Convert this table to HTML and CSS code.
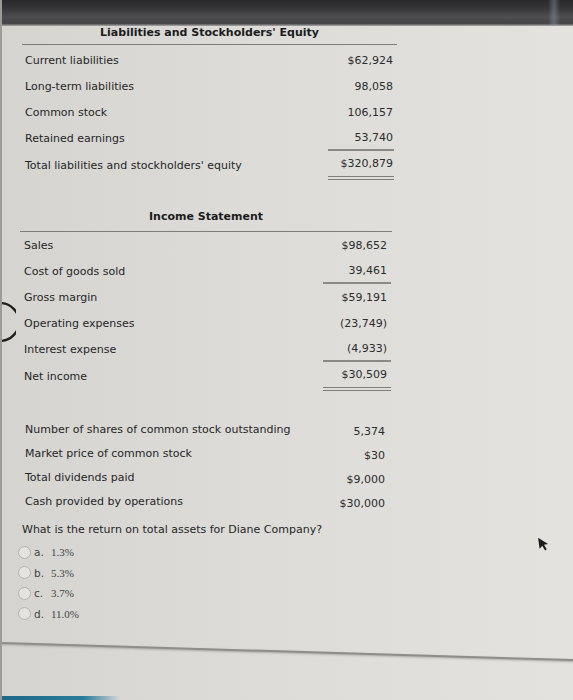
FILE: index.html
```html
<!DOCTYPE html>
<html lang="en">
<head>
<meta charset="utf-8">
<title>Diane Company</title>
<link rel="stylesheet" href="styles.css">
</head>
<body>
<div class="screen">
  <div class="topbar"><span class="glare"></span></div>
  <main class="content">
    <section class="sheet sheet-bs">
      <div class="title">Liabilities and Stockholders' Equity</div>
      <div class="row"><span class="label">Current liabilities</span><span class="val">$62,924</span></div>
      <div class="row"><span class="label">Long-term liabilities</span><span class="val">98,058</span></div>
      <div class="row"><span class="label">Common stock</span><span class="val">106,157</span></div>
      <div class="row"><span class="label">Retained earnings</span><span class="val under">53,740</span></div>
      <div class="row"><span class="label">Total liabilities and stockholders' equity</span><span class="val dbl">$320,879</span></div>
    </section>

    <section class="sheet sheet-is">
      <div class="title">Income Statement</div>
      <div class="row"><span class="label">Sales</span><span class="val">$98,652</span></div>
      <div class="row"><span class="label">Cost of goods sold</span><span class="val under">39,461</span></div>
      <div class="row"><span class="label">Gross margin</span><span class="val">$59,191</span></div>
      <div class="row"><span class="label">Operating expenses</span><span class="val">(23,749)</span></div>
      <div class="row"><span class="label">Interest expense</span><span class="val under">(4,933)</span></div>
      <div class="row"><span class="label">Net income</span><span class="val dbl">$30,509</span></div>
    </section>

    <section class="extra">
      <div class="xrow"><span class="label">Number of shares of common stock outstanding</span><span class="xval">5,374</span></div>
      <div class="xrow"><span class="label">Market price of common stock</span><span class="xval">$30</span></div>
      <div class="xrow"><span class="label">Total dividends paid</span><span class="xval">$9,000</span></div>
      <div class="xrow"><span class="label">Cash provided by operations</span><span class="xval">$30,000</span></div>
    </section>

    <p class="question">What is the return on total assets for Diane Company?</p>

    <ul class="options">
      <li class="opt"><span class="radio"></span><span class="letter">a.</span><span class="ans">1.3%</span></li>
      <li class="opt"><span class="radio"></span><span class="letter">b.</span><span class="ans">5.3%</span></li>
      <li class="opt"><span class="radio"></span><span class="letter">c.</span><span class="ans">3.7%</span></li>
      <li class="opt"><span class="radio"></span><span class="letter">d.</span><span class="ans">11.0%</span></li>
    </ul>
  </main>

  <svg class="arc" width="16" height="50" viewBox="0 0 16 50" aria-hidden="true">
    <path d="M0 6 A19 19 0 0 1 0 44" fill="none" stroke="#1e1e1e" stroke-width="2.4"/>
  </svg>
  <svg class="cursor" width="12" height="16" viewBox="0 0 12 16" aria-hidden="true">
    <path d="M1 1 L1 12 L4 9.5 L6.2 14.5 L8 13.7 L5.9 8.8 L10 8.6 Z" fill="#1c1c1c"/>
  </svg>
  <div class="edge-line"></div>
  <div class="blue-strip"></div>
</div>
</body>
</html>
```

FILE: styles.css
```css
html, body {
  margin: 0;
  padding: 0;
}

body {
  width: 573px;
  height: 700px;
  overflow: hidden;
  font-family: "DejaVu Sans", Verdana, sans-serif;
  font-size: 11px;
  color: #262626;
  background: #dedcd8;
}

.screen {
  position: relative;
  width: 573px;
  height: 700px;
  overflow: hidden;
  background: linear-gradient(to right, #d5d4d0 0%, #dcdbd7 40%, #e3e2de 100%);
  border-left: 2px solid #9c9b98;
  box-sizing: border-box;
}

.topbar {
  position: relative;
  height: 26px;
  background: linear-gradient(to bottom, #2a2a2d 0%, #353538 30%, #4e4e51 65%, #444447 90%, #a9a8a6 100%);
}

.glare {
  position: absolute;
  top: 0;
  bottom: 0;
  left: 546px;
  width: 12px;
  background: linear-gradient(to right, rgba(160,170,180,0) 0%, rgba(150,160,170,0.4) 50%, rgba(160,170,180,0) 100%);
}

.content {
  display: flex;
  flex-direction: column;
}

.sheet {
  display: flex;
  flex-direction: column;
}

.sheet-bs {
  width: 375px;
  margin-left: 20px;
}

.sheet-is {
  width: 372px;
  margin-left: 18px;
  margin-top: 30px;
}

.title {
  line-height: 14px;
  font-weight: bold;
  text-align: center;
  color: #1c1c1c;
  padding-bottom: 4px;
  border-bottom: 1px solid #7e7d7a;
}

.sheet-is .title {
  padding-bottom: 7px;
}

.row {
  display: flex;
  justify-content: space-between;
  align-items: stretch;
  height: 26px;
}

.sheet-bs .title + .row {
  margin-top: 2px;
}

.label {
  display: flex;
  align-items: center;
  padding-left: 3px;
}

.sheet-is .label {
  padding-left: 4px;
}

.val {
  display: flex;
  align-items: center;
  justify-content: flex-end;
  width: 66px;
  padding-right: 1px;
  margin-right: 3px;
  color: #2c2c2c;
  box-sizing: border-box;
}

.sheet-is .val {
  width: 68px;
  padding-right: 4px;
  margin-right: 1px;
}

.val.under {
  border-bottom: 2px solid #8a8986;
}

.val.dbl {
  height: 29px;
  border-bottom: 4px double #7f7e7b;
}

.row:has(.dbl) {
  height: 29px;
}

.extra {
  display: flex;
  flex-direction: column;
  width: 363px;
  margin-left: 20px;
  margin-top: 26px;
}

.xrow {
  display: flex;
  justify-content: space-between;
  align-items: center;
  height: 24px;
}

.xrow .label {
  padding-left: 3px;
}

.xval {
  padding-top: 4px;
  color: #2c2c2c;
}

.question {
  margin: 5px 0 0 20px;
  line-height: 24px;
  color: #262626;
}

.options {
  list-style: none;
  margin: 0;
  padding: 0 0 0 16px;
  display: flex;
  flex-direction: column;
}

.opt {
  display: flex;
  align-items: center;
  height: 20.5px;
  color: #444;
}

.radio {
  width: 11px;
  height: 11px;
  border-radius: 50%;
  border: 1px solid #b3b2ae;
  background: #e4e3df;
  margin-right: 3px;
}

.letter {
  font-size: 10.5px;
  width: 17px;
}

.ans {
  font-family: "Liberation Serif", "Times New Roman", serif;
  font-size: 11px;
  color: #444;
}

.arc {
  position: absolute;
  left: -2px;
  top: 297px;
}

.cursor {
  position: absolute;
  left: 536px;
  top: 536px;
  transform: rotate(-8deg);
}

.edge-line {
  position: absolute;
  left: -4px;
  top: 642px;
  width: 600px;
  height: 2px;
  background: #8e8d8a;
  box-shadow: 0 1px 2px rgba(120,120,118,0.5);
  transform: rotate(1.7deg);
  transform-origin: 0 0;
}

.blue-strip {
  position: absolute;
  left: -2px;
  bottom: 0;
  width: 120px;
  height: 4px;
  background: linear-gradient(to right, #1f6888 0%, #2a7c9c 70%, rgba(60,130,160,0) 100%);
}
```
